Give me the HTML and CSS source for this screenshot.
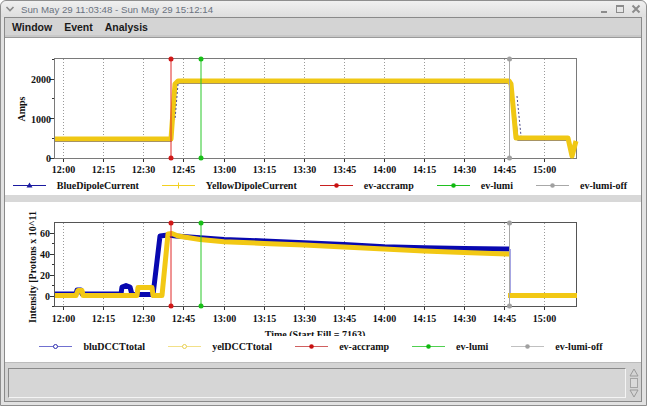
FILE: index.html
```html
<!DOCTYPE html>
<html>
<head>
<meta charset="utf-8">
<link rel="stylesheet" href="styles.css">
</head>
<body>
<div class="window">
  <div class="titlebar">
    <svg class="chevron" width="10" height="8" viewBox="0 0 10 8"><path d="M1.5 2 L5 5.5 L8.5 2" fill="none" stroke="#8a8a8a" stroke-width="1.6"/></svg>
    <span class="title">Sun May 29 11:03:48 - Sun May 29 15:12:14</span>
    <div class="wbuttons">
      <svg width="10" height="10" viewBox="0 0 10 10"><rect x="2" y="7" width="6" height="2" fill="#8c8c8c"/></svg>
      <svg width="10" height="10" viewBox="0 0 10 10"><rect x="1.5" y="1.5" width="7" height="7" fill="none" stroke="#8c8c8c" stroke-width="1"/><rect x="1" y="1" width="8" height="2" fill="#8c8c8c"/></svg>
      <svg width="10" height="10" viewBox="0 0 10 10"><path d="M1.5 1.5 L8.5 8.5 M8.5 1.5 L1.5 8.5" stroke="#8c8c8c" stroke-width="2"/></svg>
    </div>
  </div>
  <div class="frame">
    <div class="menubar">
      <span class="menu">Window</span>
      <span class="menu">Event</span>
      <span class="menu">Analysis</span>
    </div>
    <div class="panel panel-top">
      <svg class="plot" width="635" height="140" viewBox="5 38 635 140">
        <g stroke="#9a9a9a" stroke-dasharray="1 2" stroke-width="1">
          <line x1="63.5" y1="59" x2="63.5" y2="158"/>
          <line x1="103.5" y1="59" x2="103.5" y2="158"/>
          <line x1="143.5" y1="59" x2="143.5" y2="158"/>
          <line x1="183.5" y1="59" x2="183.5" y2="158"/>
          <line x1="224.5" y1="59" x2="224.5" y2="158"/>
          <line x1="264.5" y1="59" x2="264.5" y2="158"/>
          <line x1="304.5" y1="59" x2="304.5" y2="158"/>
          <line x1="344.5" y1="59" x2="344.5" y2="158"/>
          <line x1="384.5" y1="59" x2="384.5" y2="158"/>
          <line x1="424.5" y1="59" x2="424.5" y2="158"/>
          <line x1="464.5" y1="59" x2="464.5" y2="158"/>
          <line x1="504.5" y1="59" x2="504.5" y2="158"/>
          <line x1="544.5" y1="59" x2="544.5" y2="158"/>
        </g>
        <rect x="54.5" y="58.5" width="522" height="100" fill="none" stroke="#7a7a7a"/>
        <g stroke="#333" stroke-width="1">
          <line x1="50" y1="158.5" x2="54" y2="158.5"/>
          <line x1="50" y1="118.5" x2="54" y2="118.5"/>
          <line x1="50" y1="79.5" x2="54" y2="79.5"/>
          <line x1="52" y1="138.5" x2="54" y2="138.5"/>
          <line x1="52" y1="98.5" x2="54" y2="98.5"/>
          <line x1="52" y1="59.5" x2="54" y2="59.5"/>
          <line x1="63.5" y1="159" x2="63.5" y2="162"/>
          <line x1="103.5" y1="159" x2="103.5" y2="162"/>
          <line x1="143.5" y1="159" x2="143.5" y2="162"/>
          <line x1="183.5" y1="159" x2="183.5" y2="162"/>
          <line x1="224.5" y1="159" x2="224.5" y2="162"/>
          <line x1="264.5" y1="159" x2="264.5" y2="162"/>
          <line x1="304.5" y1="159" x2="304.5" y2="162"/>
          <line x1="344.5" y1="159" x2="344.5" y2="162"/>
          <line x1="384.5" y1="159" x2="384.5" y2="162"/>
          <line x1="424.5" y1="159" x2="424.5" y2="162"/>
          <line x1="464.5" y1="159" x2="464.5" y2="162"/>
          <line x1="504.5" y1="159" x2="504.5" y2="162"/>
          <line x1="544.5" y1="159" x2="544.5" y2="162"/>
        </g>
        <path d="M55 141 L171 141 L176 84 L179 83 L509 83 L512 87 L518 140 L568 140 L572 158 L576 142" fill="none" stroke="#2a2a9a" stroke-width="1.4"/>
        <path d="M55 139 L171 139 L175 84 L178 81 L509 81 L511 84 L516 138 L568 138 L572 156 L576 141" fill="none" stroke="#f0c814" stroke-width="5" stroke-linejoin="round"/>
        <path d="M178 84 L175 120 M517 96 L521 136" fill="none" stroke="#4a4a8a" stroke-width="1" stroke-dasharray="2 2"/>
        <line x1="171" y1="59" x2="171" y2="158" stroke="#e02828"/>
        <circle cx="171" cy="59" r="2.5" fill="#d01818"/><circle cx="171" cy="158" r="2.5" fill="#d01818"/>
        <line x1="201" y1="59" x2="201" y2="158" stroke="#28c828"/>
        <circle cx="201" cy="59" r="2.5" fill="#18c018"/><circle cx="201" cy="158" r="2.5" fill="#18c018"/>
        <line x1="509.5" y1="59" x2="509.5" y2="158" stroke="#a8a8a8"/>
        <circle cx="509.5" cy="59" r="2.5" fill="#a0a0a0"/><circle cx="509.5" cy="158" r="2.5" fill="#a0a0a0"/>
        <g class="tick">
          <text x="51" y="83" text-anchor="end">2000</text>
          <text x="51" y="123" text-anchor="end">1000</text>
          <text x="51" y="162" text-anchor="end">0</text>
          <text x="63.5" y="173" text-anchor="middle">12:00</text>
          <text x="103.5" y="173" text-anchor="middle">12:15</text>
          <text x="143.5" y="173" text-anchor="middle">12:30</text>
          <text x="183.5" y="173" text-anchor="middle">12:45</text>
          <text x="224.5" y="173" text-anchor="middle">13:00</text>
          <text x="264.5" y="173" text-anchor="middle">13:15</text>
          <text x="304.5" y="173" text-anchor="middle">13:30</text>
          <text x="344.5" y="173" text-anchor="middle">13:45</text>
          <text x="384.5" y="173" text-anchor="middle">14:00</text>
          <text x="424.5" y="173" text-anchor="middle">14:15</text>
          <text x="464.5" y="173" text-anchor="middle">14:30</text>
          <text x="504.5" y="173" text-anchor="middle">14:45</text>
          <text x="544.5" y="173" text-anchor="middle">15:00</text>
          <text x="0" y="0" text-anchor="middle" transform="translate(25 109) rotate(-90)">Amps</text>
        </g>
      </svg>
      <div class="legend legend-top">
        <div class="item"><svg width="33" height="7" viewBox="0 0 33 7"><line x1="0" y1="3.5" x2="33" y2="3.5" stroke="#1a1aa0"/><path d="M16.5 0.5 L19.5 5.5 L13.5 5.5 Z" fill="#1a1aa0"/></svg><span>BlueDipoleCurrent</span></div>
        <div class="item"><svg width="33" height="7" viewBox="0 0 33 7"><line x1="0" y1="3.5" x2="33" y2="3.5" stroke="#f2d020"/><line x1="16.5" y1="0.5" x2="16.5" y2="6.5" stroke="#f2d020"/></svg><span>YellowDipoleCurrent</span></div>
        <div class="item"><svg width="33" height="7" viewBox="0 0 33 7"><line x1="0" y1="3.5" x2="33" y2="3.5" stroke="#c82020"/><circle cx="16.5" cy="3.5" r="2.3" fill="#c81010"/></svg><span>ev-accramp</span></div>
        <div class="item"><svg width="33" height="7" viewBox="0 0 33 7"><line x1="0" y1="3.5" x2="33" y2="3.5" stroke="#20c020"/><circle cx="16.5" cy="3.5" r="2.3" fill="#10b810"/></svg><span>ev-lumi</span></div>
        <div class="item"><svg width="33" height="7" viewBox="0 0 33 7"><line x1="0" y1="3.5" x2="33" y2="3.5" stroke="#a8a8a8"/><circle cx="16.5" cy="3.5" r="2.3" fill="#a0a0a0"/></svg><span>ev-lumi-off</span></div>
      </div>
    </div>
    <div class="separator"></div>
    <div class="panel panel-bottom">
      <svg class="plot" width="635" height="134" viewBox="5 202 635 134">
        <g stroke="#9a9a9a" stroke-dasharray="1 2" stroke-width="1">
          <line x1="63.5" y1="223" x2="63.5" y2="306"/>
          <line x1="103.5" y1="223" x2="103.5" y2="306"/>
          <line x1="143.5" y1="223" x2="143.5" y2="306"/>
          <line x1="183.5" y1="223" x2="183.5" y2="306"/>
          <line x1="224.5" y1="223" x2="224.5" y2="306"/>
          <line x1="264.5" y1="223" x2="264.5" y2="306"/>
          <line x1="304.5" y1="223" x2="304.5" y2="306"/>
          <line x1="344.5" y1="223" x2="344.5" y2="306"/>
          <line x1="384.5" y1="223" x2="384.5" y2="306"/>
          <line x1="424.5" y1="223" x2="424.5" y2="306"/>
          <line x1="464.5" y1="223" x2="464.5" y2="306"/>
          <line x1="504.5" y1="223" x2="504.5" y2="306"/>
          <line x1="544.5" y1="223" x2="544.5" y2="306"/>
        </g>
        <rect x="54.5" y="222.5" width="522" height="84" fill="none" stroke="#555"/>
        <g stroke="#333" stroke-width="1">
          <line x1="50" y1="296.5" x2="54" y2="296.5"/>
          <line x1="50" y1="275.5" x2="54" y2="275.5"/>
          <line x1="50" y1="254.5" x2="54" y2="254.5"/>
          <line x1="50" y1="233.5" x2="54" y2="233.5"/>
          <line x1="52" y1="285.5" x2="54" y2="285.5"/>
          <line x1="52" y1="264.5" x2="54" y2="264.5"/>
          <line x1="52" y1="243.5" x2="54" y2="243.5"/>
          <line x1="52" y1="306.5" x2="54" y2="306.5"/>
          <line x1="63.5" y1="307" x2="63.5" y2="310"/>
          <line x1="103.5" y1="307" x2="103.5" y2="310"/>
          <line x1="143.5" y1="307" x2="143.5" y2="310"/>
          <line x1="183.5" y1="307" x2="183.5" y2="310"/>
          <line x1="224.5" y1="307" x2="224.5" y2="310"/>
          <line x1="264.5" y1="307" x2="264.5" y2="310"/>
          <line x1="304.5" y1="307" x2="304.5" y2="310"/>
          <line x1="344.5" y1="307" x2="344.5" y2="310"/>
          <line x1="384.5" y1="307" x2="384.5" y2="310"/>
          <line x1="424.5" y1="307" x2="424.5" y2="310"/>
          <line x1="464.5" y1="307" x2="464.5" y2="310"/>
          <line x1="504.5" y1="307" x2="504.5" y2="310"/>
          <line x1="544.5" y1="307" x2="544.5" y2="310"/>
        </g>
        <path d="M55 294 L76 294 L77 290 L81 290 L82 294 L121 294 L122 287 L126 285.5 L130 287 L132 294.5 L152 294.5 L153 295 L160 236 L168 235 L176 236 L224 239.5 L264 241 L304 242.8 L344 244.5 L384 246.7 L424 247.8 L464 248.5 L504 249 L510 249" fill="none" stroke="#0808b0" stroke-width="5" stroke-linejoin="round"/>
        <line x1="510" y1="249" x2="510" y2="296" stroke="#6a6ad0" stroke-width="1.2"/>
        <path d="M55 295.5 L76 295.5 L78 290.5 L82 290.5 L83 295.5 L137 295.5 L138 287.5 L152 287.5 L153 295.5 L162 295.5 L168 234 L172 233.5 L178 236 L200 239.5 L224 241.7 L264 243.4 L304 245 L344 247 L384 249 L424 251 L464 252.5 L507 254 L509 254" fill="none" stroke="#f2c814" stroke-width="5" stroke-linejoin="round"/>
        <path d="M508 295.5 L577 295.5" fill="none" stroke="#f2c814" stroke-width="5"/>
        <line x1="171" y1="223" x2="171" y2="306" stroke="#e02828"/>
        <circle cx="171" cy="223" r="2.5" fill="#d01818"/><circle cx="171" cy="306" r="2.5" fill="#d01818"/>
        <line x1="201" y1="223" x2="201" y2="306" stroke="#28c828"/>
        <circle cx="201" cy="223" r="2.5" fill="#18c018"/><circle cx="201" cy="306" r="2.5" fill="#18c018"/>
        <line x1="509.5" y1="223" x2="509.5" y2="306" stroke="#a8a8a8"/>
        <circle cx="509.5" cy="223" r="2.5" fill="#a0a0a0"/><circle cx="509.5" cy="306" r="2.5" fill="#a0a0a0"/>
        <g class="tick">
          <text x="50" y="237" text-anchor="end">60</text>
          <text x="50" y="258" text-anchor="end">40</text>
          <text x="50" y="279" text-anchor="end">20</text>
          <text x="50" y="300" text-anchor="end">0</text>
          <text x="63.5" y="321.5" text-anchor="middle">12:00</text>
          <text x="103.5" y="321.5" text-anchor="middle">12:15</text>
          <text x="143.5" y="321.5" text-anchor="middle">12:30</text>
          <text x="183.5" y="321.5" text-anchor="middle">12:45</text>
          <text x="224.5" y="321.5" text-anchor="middle">13:00</text>
          <text x="264.5" y="321.5" text-anchor="middle">13:15</text>
          <text x="304.5" y="321.5" text-anchor="middle">13:30</text>
          <text x="344.5" y="321.5" text-anchor="middle">13:45</text>
          <text x="384.5" y="321.5" text-anchor="middle">14:00</text>
          <text x="424.5" y="321.5" text-anchor="middle">14:15</text>
          <text x="464.5" y="321.5" text-anchor="middle">14:30</text>
          <text x="504.5" y="321.5" text-anchor="middle">14:45</text>
          <text x="544.5" y="321.5" text-anchor="middle">15:00</text>
          <text x="315" y="337.5" text-anchor="middle">Time (Start Fill = 7163)</text>
          <text x="0" y="0" text-anchor="middle" transform="translate(36 267) rotate(-90)">Intensity [Protons x 10^11</text>
        </g>
      </svg>
      <div class="legend legend-bottom">
        <div class="item"><svg width="33" height="7" viewBox="0 0 33 7"><line x1="0" y1="3.5" x2="33" y2="3.5" stroke="#7070d0"/><circle cx="16.5" cy="3.5" r="2" fill="#fff" stroke="#3030b0"/></svg><span>bluDCCTtotal</span></div>
        <div class="item"><svg width="33" height="7" viewBox="0 0 33 7"><line x1="0" y1="3.5" x2="33" y2="3.5" stroke="#f2e088"/><circle cx="16.5" cy="3.5" r="2" fill="#fff" stroke="#e8d050"/></svg><span>yelDCCTtotal</span></div>
        <div class="item"><svg width="33" height="7" viewBox="0 0 33 7"><line x1="0" y1="3.5" x2="33" y2="3.5" stroke="#d06060"/><circle cx="16.5" cy="3.5" r="2.3" fill="#c81010"/></svg><span>ev-accramp</span></div>
        <div class="item"><svg width="33" height="7" viewBox="0 0 33 7"><line x1="0" y1="3.5" x2="33" y2="3.5" stroke="#50d050"/><circle cx="16.5" cy="3.5" r="2.3" fill="#10b810"/></svg><span>ev-lumi</span></div>
        <div class="item"><svg width="33" height="7" viewBox="0 0 33 7"><line x1="0" y1="3.5" x2="33" y2="3.5" stroke="#c0c0c0"/><circle cx="16.5" cy="3.5" r="2.3" fill="#a0a0a0"/></svg><span>ev-lumi-off</span></div>
      </div>
    </div>
    <div class="status">
      <div class="field"></div>
      <div class="scrollbar">
        <svg width="10" height="9" viewBox="0 0 10 9"><path d="M5 1 L9 8 L1 8 Z" fill="none" stroke="#9a9a9a"/></svg>
        <div class="thumb"></div>
        <svg width="10" height="9" viewBox="0 0 10 9"><path d="M5 8 L9 1 L1 1 Z" fill="none" stroke="#9a9a9a"/></svg>
      </div>
    </div>
  </div>
</div>
</body>
</html>
```

FILE: styles.css
```css
* { box-sizing: border-box; }
html, body { margin: 0; padding: 0; }
body {
  width: 647px;
  height: 406px;
  background: #ffffff;
  overflow: hidden;
  font-family: "Liberation Sans", Arial, sans-serif;
}
.window {
  width: 647px;
  height: 406px;
  background: #e2e2e2;
  border: 1px solid #8e8e8e;
  border-radius: 6px 6px 0 0;
  display: flex;
  flex-direction: column;
}
.titlebar {
  height: 16px;
  display: flex;
  align-items: center;
  padding: 0 4px 0 4px;
  background: linear-gradient(#f0f0f0, #dedede);
  border-radius: 6px 6px 0 0;
  flex: none;
}
.chevron { flex: none; margin-right: 6px; }
.title {
  font-size: 9.7px;
  color: #6a7280;
  white-space: nowrap;
  flex: 1;
}
.wbuttons {
  display: flex;
  gap: 6px;
  margin-right: 1px;
}
.frame {
  flex: 1;
  margin: 0 4px 3px 3px;
  border: 1px solid #8a8a8a;
  display: flex;
  flex-direction: column;
  background: #d6d6d6;
}
.menubar {
  height: 20px;
  flex: none;
  display: flex;
  align-items: center;
  padding: 0 0 2px 7px;
  gap: 12px;
  background: #d4d4d4;
  border-bottom: 1px solid #9a9a9a;
  box-shadow: inset 0 -2px 0 #c8c8c8;
}
.menu {
  font-size: 10.5px;
  font-weight: bold;
  color: #1a1a1a;
}
.panel {
  background: #ffffff;
  flex: none;
  display: flex;
  flex-direction: column;
}
.panel-top { height: 157px; }
.panel-bottom { height: 160px; }
.plot { display: block; flex: none; }
.tick text {
  font-family: "Liberation Serif", "Times New Roman", serif;
  font-size: 10px;
  font-weight: bold;
  fill: #111;
}
.separator {
  height: 7px;
  flex: none;
  background: #d8d8d8;
}
.legend {
  display: flex;
  justify-content: center;
  align-items: center;
  gap: 23px;
  padding-right: 6px;
  font-family: "Liberation Serif", "Times New Roman", serif;
  font-size: 10px;
  font-weight: bold;
  color: #111;
}
.legend-top { height: 14px; }
.legend-bottom { height: 20px; padding-right: 4px; }
.item {
  display: flex;
  align-items: center;
  gap: 11px;
  white-space: nowrap;
}
.item svg { display: block; }
.status {
  flex: 1;
  display: flex;
  gap: 3px;
  padding: 5px 2px 3px 3px;
  background: #d4d4d4;
  border-top: 1px solid #bcbcbc;
}
.field {
  flex: 1;
  background: #d6d6d6;
  border: 1px solid;
  border-color: #8a8a8a #f4f4f4 #f4f4f4 #8a8a8a;
}
.scrollbar {
  width: 10px;
  display: flex;
  flex-direction: column;
  align-items: center;
  gap: 1px;
}
.thumb {
  flex: 1;
  width: 8px;
  border: 1px solid #a4a4a4;
  background: #dadada;
}
```
